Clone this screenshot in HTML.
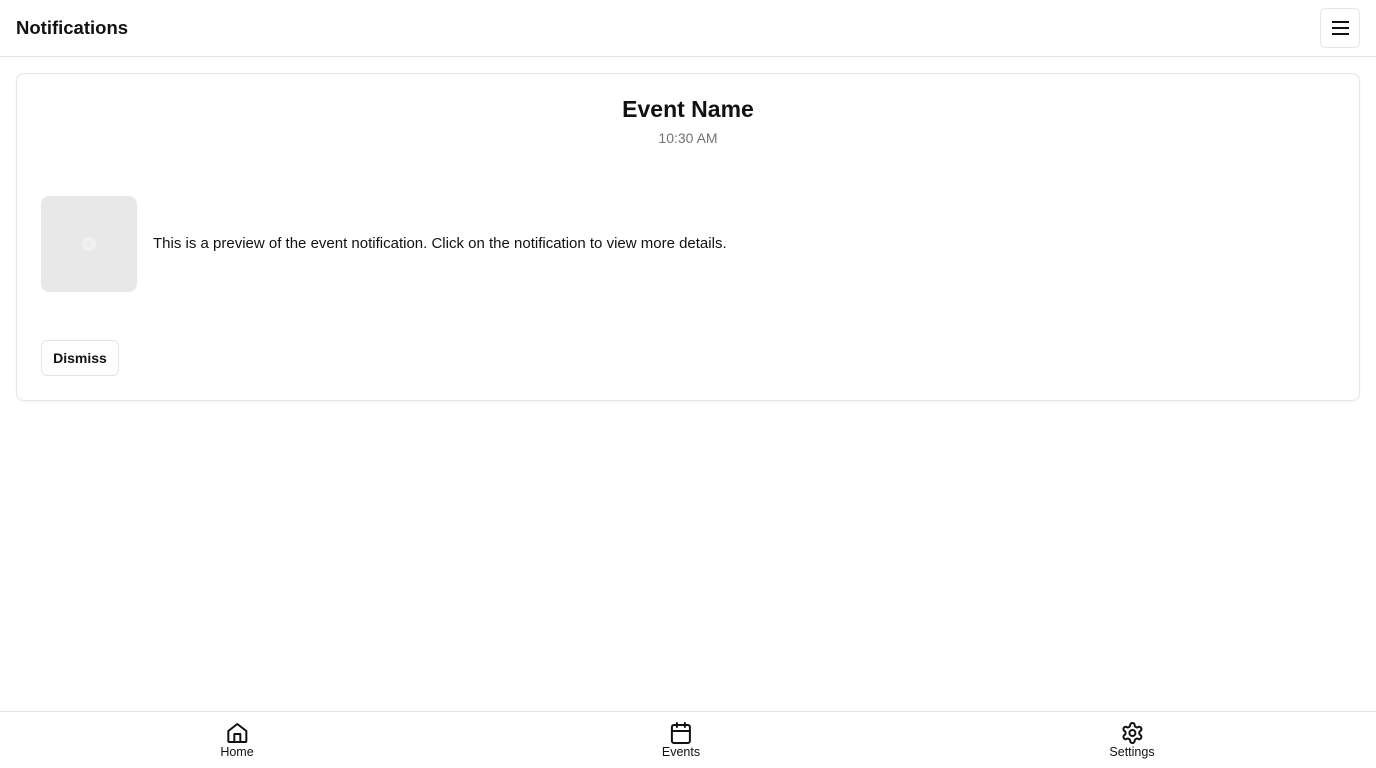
<!DOCTYPE html>
<html><head><meta charset="utf-8"><style>
*{box-sizing:border-box;margin:0;padding:0}
body{width:1376px;height:768px;background:#fff;font-family:"Liberation Sans",sans-serif;color:#111;position:relative;overflow:hidden}
.hdr{position:absolute;left:0;top:0;width:1376px;height:57px;border-bottom:1px solid #e5e5e5}
.hdr h1{position:absolute;left:16px;top:17px;font-size:18.5px;font-weight:700}
.menu{position:absolute;left:1320px;top:8px;width:40px;height:40px;border:1px solid #e5e5e5;border-radius:6px}
.menu span{position:absolute;left:11px;width:17px;height:2px;background:#111}
.card{position:absolute;left:16px;top:73px;width:1344px;height:328px;border:1px solid #e5e5e5;border-radius:8px;box-shadow:0 1px 2px rgba(0,0,0,.04)}
.card h2{position:absolute;left:0;width:100%;top:22px;text-align:center;font-size:23px;font-weight:700}
.time{position:absolute;left:0;width:100%;top:56px;text-align:center;font-size:14px;color:#737373}
.img{position:absolute;left:24px;top:122px;width:96px;height:96px;background:#e8e8e8;border-radius:8px}
.img i{position:absolute;left:41px;top:41px;width:14px;height:14px;border-radius:50%;background:#ececec;border:4px solid #f0f0f0}
.txt{position:absolute;left:136px;top:161px;font-size:15px}
.btn{position:absolute;left:24px;top:266px;width:78px;height:36px;border:1px solid #e5e5e5;border-radius:6px;font-size:14px;font-weight:700;text-align:center;line-height:34px}
.nav{position:absolute;left:0;top:711px;width:1376px;height:57px;border-top:1px solid #e5e5e5}
.tab{position:absolute;top:9px;text-align:center;font-size:12.5px;line-height:14px;transform:translateX(-50%)}
.tab svg{display:block;margin:0 auto 0}
</style></head><body>
<div class="hdr"><h1>Notifications</h1>
<div class="menu"><span style="top:12px"></span><span style="top:18px"></span><span style="top:24px"></span></div></div>
<div class="card">
<h2>Event Name</h2><div class="time">10:30 AM</div>
<div class="img"><i></i></div>
<div class="txt">This is a preview of the event notification. Click on the notification to view more details.</div>
<div class="btn">Dismiss</div>
</div>
<div class="nav">
<div class="tab" style="left:237px"><svg width="24" height="24" viewBox="0 0 24 24" fill="none" stroke="#111" stroke-width="2" stroke-linejoin="round"><path d="M3 10l9-7 9 7v10a1 1 0 0 1-1 1H4a1 1 0 0 1-1-1z"/><path d="M9 21v-8h6v8"/></svg>Home</div>
<div class="tab" style="left:681px"><svg width="24" height="24" viewBox="0 0 24 24" fill="none" stroke="#111" stroke-width="2" stroke-linecap="round"><rect x="3" y="4" width="18" height="18" rx="2"/><path d="M16 2v4M8 2v4M3 10h18"/></svg>Events</div>
<div class="tab" style="left:1132px"><svg width="24" height="24" viewBox="0 0 24 24" fill="none" stroke="#111" stroke-width="2" stroke-linejoin="round"><path d="M12.22 2h-.44a2 2 0 0 0-2 2v.18a2 2 0 0 1-1 1.730l-.43.25a2 2 0 0 1-2 0l-.15-.08a2 2 0 0 0-2.73.73l-.22.38a2 2 0 0 0 .73 2.73l.15.1a2 2 0 0 1 1 1.72v.51a2 2 0 0 1-1 1.74l-.15.09a2 2 0 0 0-.73 2.73l.22.38a2 2 0 0 0 2.73.73l.15-.08a2 2 0 0 1 2 0l.43.25a2 2 0 0 1 1 1.73V20a2 2 0 0 0 2 2h.44a2 2 0 0 0 2-2v-.18a2 2 0 0 1 1-1.73l.43-.25a2 2 0 0 1 2 0l.15.08a2 2 0 0 0 2.73-.73l.22-.39a2 2 0 0 0-.73-2.73l-.15-.08a2 2 0 0 1-1-1.74v-.5a2 2 0 0 1 1-1.74l.15-.09a2 2 0 0 0 .73-2.73l-.22-.38a2 2 0 0 0-2.730-.73l-.15.08a2 2 0 0 1-2 0l-.43-.25a2 2 0 0 1-1-1.73V4a2 2 0 0 0-2-2z"/><circle cx="12" cy="12" r="3"/></svg>Settings</div>
</div>
</body></html>
